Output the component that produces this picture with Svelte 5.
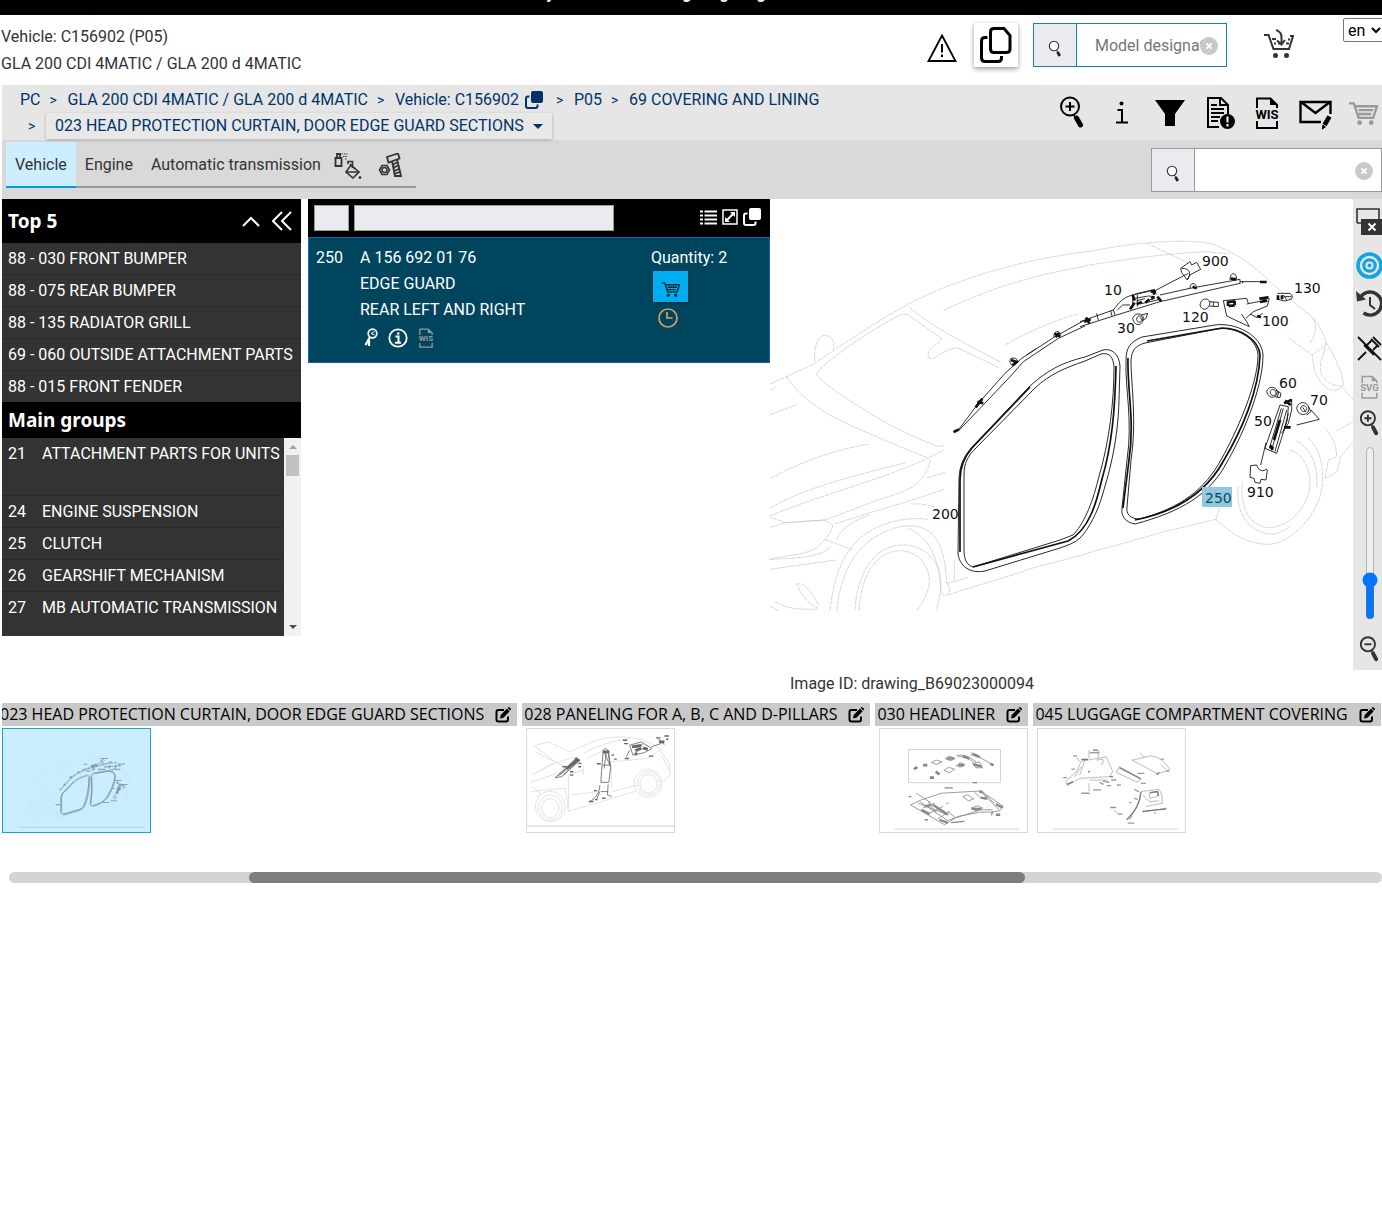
<script>
  let zoom = $state(20);

  const top5 = [
    '88 - 030 FRONT BUMPER',
    '88 - 075 REAR BUMPER',
    '88 - 135 RADIATOR GRILL',
    '69 - 060 OUTSIDE ATTACHMENT PARTS',
    '88 - 015 FRONT FENDER'
  ];

  const mainGroups = [
    { id: '21', name: 'ATTACHMENT PARTS FOR UNITS', tall: true },
    { id: '24', name: 'ENGINE SUSPENSION' },
    { id: '25', name: 'CLUTCH' },
    { id: '26', name: 'GEARSHIFT MECHANISM' },
    { id: '27', name: 'MB AUTOMATIC TRANSMISSION', last: true }
  ];

  const callouts = [
    ['900', 1202, 266], ['10', 1104, 295], ['30', 1117, 333], ['120', 1182, 322],
    ['100', 1262, 326], ['130', 1294, 293], ['60', 1279, 388], ['70', 1310, 405],
    ['50', 1254, 426], ['910', 1247, 497], ['200', 932, 519]
  ];
</script>

{#snippet cartShape()}
  <path d="M1 3h5l5 15h15l4-12H8M11 10h15M11 14h13" fill="none" stroke="currentColor" stroke-width="2.4" />
  <circle cx="12" cy="23" r="2.5" fill="currentColor" />
  <circle cx="24" cy="23" r="2.5" fill="currentColor" />
{/snippet}

{#snippet lens()}
  <svg width="14" height="18" viewBox="0 0 14 18" aria-hidden="true">
    <circle cx="6" cy="6" r="4.7" fill="#fff" stroke="#333" stroke-width="1.1" />
    <path d="M8.5 10l1 2" stroke="#333" stroke-width="1" />
    <path d="M9.5 12l2.3 4" stroke="#222" stroke-width="2.8" />
  </svg>
{/snippet}

{#snippet clearMark()}
  <svg width="18" height="18" viewBox="0 0 18 18" aria-hidden="true">
    <circle cx="9" cy="9" r="9" fill="#c8c8c8" />
    <path d="M6.4 6.4l5.2 5.2M11.6 6.4l-5.2 5.2" stroke="#fff" stroke-width="2" />
  </svg>
{/snippet}

{#snippet magnifier(minus)}
  <svg width="19" height="26" viewBox="0 0 24 33" aria-hidden="true">
    <circle cx="10" cy="10.500" r="9" fill="none" stroke="currentColor" stroke-width="2.400" />
    <path d={minus ? 'M5.500 10.500h9' : 'M5.500 10.500h9M10 6v9'} stroke="currentColor" stroke-width="2.400" />
    <path d="M14 18l2 3" stroke="currentColor" stroke-width="1.500" />
    <path d="M16.500 22l4 7.500" stroke="currentColor" stroke-width="5" stroke-linecap="round" />
  </svg>
{/snippet}

{#snippet docText(label, size)}
  <path d="M3 11V1.500h13.500L23 8v3M3 24v7h20v-7" fill="none" stroke="currentColor" stroke-width="2" />
  <path d="M16 1.500V8h7z" fill="currentColor" />
  <text x="13" y="21.500" text-anchor="middle" font-size={size} font-weight="700" fill="currentColor">{label}</text>
{/snippet}

{#snippet copyShape()}
  <rect x="6" y="0" width="12" height="12" rx="2" fill="currentColor" />
  <path d="M4.500 5.500H3a2 2 0 0 0-2 2V15a2 2 0 0 0 2 2h7.500a2 2 0 0 0 2-2v-1.500" fill="none" stroke="currentColor" stroke-width="2" />
{/snippet}

{#snippet editIcon()}
  <svg width="16" height="16" viewBox="0 0 16 16" aria-hidden="true">
    <path d="M9 3H3.500Q1.500 3 1.500 5v7.500Q1.500 14.500 3.500 14.500H11q2 0 2-2V9.500" fill="none" stroke="#000" stroke-width="2" />
    <path d="M5 11.500l.7-3.600L12 1.600l2.700 2.700L8.400 10.700zM12.700.9l.7-.7q.6-.4 1.200.2l1.200 1.200q.5.500 0 1.200l-.6.700z" fill="#000" />
  </svg>
{/snippet}

{#snippet partsDrawing()}
  <g class="faint" transform="translate(765 220) scale(.33333)">
    <path d="M15 492L65 470L150 430L215 385C300 330 400 260 520 210C640 160 800 115 960 96M535 272C650 215 800 165 960 139M720 375C790 335 870 300 940 282" />
    <path d="M150 425C145 390 155 345 182 346C205 350 208 370 206 388" />
    <path d="M65 470C110 540 190 590 300 635C380 670 440 695 490 714L537 690M155 462C165 440 230 390 310 340C350 315 390 290 415 283L428 284L530 355L522 368C500 380 485 395 490 412L505 416L530 400C550 390 565 382 580 384L700 442M433 262C500 320 600 370 710 428M155 462C170 490 250 540 340 595C420 640 480 665 520 680L537 676" />
    <path d="M15 584L96 554M15 512L32 500M15 776C100 730 200 690 310 673M15 865C120 800 300 760 425 727M15 888C150 830 350 780 490 714M495 718C492 760 460 800 400 820L320 847L180 900L62 908L15 892M485 774L540 757M210 912C300 880 420 850 537 808M215 960C230 920 270 900 315 885M437 852C470 850 490 855 510 862" />
    <path d="M15 922L62 908L180 900L203 915C200 940 180 955 165 975C140 1005 60 1005 15 1018M180 958L263 990M15 1018C100 1015 180 1010 197 978M15 1048L212 1020" />
    <path d="M195 1172C205 1080 230 1000 290 950C350 905 420 890 490 898M215 1172C225 1080 255 1010 310 965C350 935 400 915 440 918C500 920 540 960 545 1090" />
    <path d="M270 1172C275 1060 330 970 420 975C500 980 540 1050 525 1120L515 1172M283 1172C285 1070 335 990 410 992C490 1000 505 1080 485 1120C475 1150 465 1160 455 1172" />
    <path d="M430 925C480 945 520 1000 525 1090M545 1090C560 1100 555 1125 540 1127C525 1120 525 1110 527 1090M568 1020V1085L545 1090M568 1085L608 1072M550 1125C650 1090 720 1075 800 1045L960 1003" />
    <path d="M95 1092C110 1088 130 1095 160 1155L155 1163C130 1150 105 1120 95 1092M30 1145C60 1165 100 1170 160 1167M15 1158L40 1172" />
  </g>
  <g class="faint" transform="translate(1080 230) scale(.33333)">
    <path d="M15 66C80 55 150 42 200 39C280 32 360 30 405 45C450 62 500 90 555 140M15 107C100 95 200 75 380 65L450 72M200 39C250 65 300 85 325 100" />
    <path d="M555 140C600 185 660 230 700 265C720 290 735 320 737 335C760 370 790 430 790 465C780 490 740 480 735 470C715 450 700 430 697 375L627 325M700 265C712 290 705 320 690 340M737 335C740 360 715 390 722 430C740 460 765 470 788 468M697 375L737 345M790 475L820 510" />
  </g>
  <g class="faint" transform="translate(1080 400) scale(.33333)">
    <path d="M630 150C670 165 690 200 690 255C685 320 630 380 570 383C510 380 480 330 487 245M475 260C465 330 500 400 580 403C600 400 615 390 630 380M650 123C700 150 715 210 710 260M685 115C730 150 735 240 720 290C690 380 610 435 560 433C500 430 450 400 408 358L418 325M408 358L260 393L130 430L15 461M735 85C760 110 770 140 770 170L745 180L735 235L772 215L782 170L820 125M770 92L820 65" />
  </g>
  <g class="dark">
    <path d="M959 480C959 465 965 455 972 447L1030 386C1050 368 1065 362 1085 357L1103 350C1112 348 1119 354 1120 366L1119 400C1118 440 1110 470 1103 493C1098 512 1088 530 1080 538C1075 543 1068 545 1060 548L985 571C970 574 959 566 958 553Z" />
    <path d="M964 475C964 463 968 456 975 449L1035 388C1050 374 1065 368 1085 361L1101 354C1110 352 1113 358 1114 366C1114 400 1110 440 1098 480C1092 505 1083 525 1073 535L1060 540L973 567C967 565 964 560 964 550Z" />
    <path d="M1126 360C1126 348 1130 342 1142 337L1215 325C1235 322 1262 335 1263 355C1263 390 1240 440 1227 462C1210 495 1180 512 1135 524C1124 522 1121 515 1122 508L1127 460C1133 420 1125 390 1126 360Z" />
    <path d="M1131 360C1132 350 1135 346 1145 343L1217 329C1235 326 1257 338 1258 355C1258 385 1235 435 1222 458C1205 490 1180 508 1140 519C1130 519 1126 514 1127 507L1131 460C1137 420 1131 385 1131 360Z" />
    <path class="heavy" d="M960 552V480C960 466 965 456 972 448L1030 387M973 567L1068 541C1090 530 1097 500 1102 479C1112 445 1115 410 1116 366" />
    <path class="heavy" d="M1135 520C1180 511 1208 490 1224 460C1242 430 1259 390 1260 355C1259 340 1240 328 1222 328L1147 341M1123 508L1129 460C1135 420 1127 390 1128 358" />
  </g>
  <g class="dark" transform="translate(765 220) scale(.33333)">
    <path d="M565 635L580 630L640 550L720 460L770 415L870 350L960 300M583 630L650 560L740 465L775 425L880 355L960 318M785 405L815 385" />
    <path class="blob" d="M566 636L582 628M632 562L652 536M637 545L655 550M738 420L755 426L742 436M868 340L886 350M872 352L882 338" />
    <path d="M738 415C730 425 740 445 750 432C765 425 755 410 738 415M866 350C868 330 885 330 886 345" />
  </g>
  <g class="dark" transform="translate(1080 230) scale(.33333)">
    <path d="M0 275L100 240C115 220 130 200 160 195L215 182M0 290L110 255L240 215L480 160M100 240L105 255M92 242L96 258M50 250L55 270M112 240L128 225H150M240 195L330 175L480 148V162M488 153V160M480 155H545M225 182L325 130" />
    <path d="M165 192L225 178M165 205L205 198L225 200M170 212L195 206M200 212L225 205M180 222L240 208M158 192V235M172 195V230M215 180L230 192" />
    <path class="blob" d="M12 275L32 268M18 262L28 280M158 195L164 212M164 218L150 238M170 222L186 216M196 218L208 208M214 206L222 200M212 184L228 186M222 180V194M232 200L244 214M338 170L348 175M452 146L468 148M540 156H560" />
    <path d="M330 175C330 155 350 155 350 178M450 150C450 125 470 125 470 148" />
    <path d="M302 115L330 95L335 105L350 97L362 118L348 125L330 135L322 150L305 128ZM305 115C330 115 335 130 322 148" />
    <path d="M360 225C362 205 385 200 390 218C388 240 365 245 360 225M388 215L415 217V230L388 228M400 216V229" />
    <path d="M158 265C165 245 190 250 190 265C190 285 165 295 158 265M170 268C170 255 185 255 188 265C185 280 172 280 170 268M185 255L203 250L198 265L190 270M180 262L188 272" />
    <path d="M430 212L500 205L505 220M430 212L440 258L508 290M500 222L540 214M568 205L562 228L520 245L498 265M484 252L500 275L508 290M510 252L530 262L548 250" />
    <path class="blob" d="M443 216L466 214M446 228L464 226M444 214V228M464 214V226M538 206L566 202M540 216L562 212M552 202V214M531 258L543 262" />
    <path class="blob" d="M594 196V210M606 196V208" />
    <path d="M592 190H630L637 198L635 207L615 213L592 208M610 195L620 210M612 200H634" />
    <path d="M560 485C565 465 590 470 592 485C590 505 568 510 560 485M570 485C575 472 590 480 588 490C585 500 572 500 570 485M588 480L603 490L600 503L585 500M596 485L592 502" />
    <path d="M650 535C655 510 685 515 687 535C685 560 655 560 650 535M662 535C665 520 682 528 680 538C675 550 664 545 662 535M685 530L693 545L680 555M668 532L678 546M693 540L718 568L650 585" />
    <path d="M600 525L625 530L622 570L590 670L555 655ZM610 535L575 660M620 540L585 665M604 535L568 655M615 515L635 508V540L625 580L605 610M625 550L612 600" />
    <path class="blob" d="M612 520L635 510M615 512L632 525M612 592H632M600 570L582 630M572 650L578 660" />
  </g>
  <g class="dark" transform="translate(1080 400) scale(.33333)">
    <path d="M558 128L542 195M512 197L530 195C535 215 555 215 558 207L562 210L558 240L543 238L540 250L525 247L522 235L510 232Z" />
    <path class="blob" d="M570 136L580 146" />
  </g>
{/snippet}

<div class="page">
  <div class="banner" aria-hidden="true"><span>y</span><span>g</span><span>g</span><span>g</span></div>

  <header>
    <div class="vehicle">
      <div>Vehicle: C156902 (P05)</div>
      <div>GLA 200 CDI 4MATIC / GLA 200 d 4MATIC</div>
    </div>
    <div class="head-tools">
      <button class="plain warn" aria-label="Warnings">
        <svg width="30" height="28" viewBox="0 0 30 28" aria-hidden="true">
          <path d="M15 1.500L28.500 27H1.500z" fill="none" stroke="#000" stroke-width="1.800" />
          <path d="M15 10v8.500M15 20.500v2.500" stroke="#000" stroke-width="2" />
        </svg>
      </button>
      <button class="plain copy" aria-label="Copy vehicle">
        <svg width="32" height="36" viewBox="0 0 32 36" aria-hidden="true">
          <path d="M13 1.500h11l6 7V22q0 3.500-3.500 3.500H14q-3.500 0-3.500-3.500V5q0-3.500 3.500-3.500z" fill="none" stroke="#000" stroke-width="3" />
          <path d="M7.500 10.500H5q-3.500 0-3.500 3.500v17q0 3.500 3.500 3.500h13q3.500 0 3.500-3.500v-2" fill="none" stroke="#000" stroke-width="3" />
        </svg>
      </button>
      <div class="search blue">
        <button class="go" aria-label="Search model">{@render lens()}</button>
        <input type="text" aria-label="Model designation" placeholder="Model designation" />
        <button class="plain clear" aria-label="Clear model">{@render clearMark()}</button>
      </div>
      <button class="plain import" aria-label="Import cart">
        <svg width="30" height="30" viewBox="0 0 30 30" aria-hidden="true">
          <path d="M0 6h4.500l5 14h15.500l4-13h-3M8 10h4M10 14.500h2M14 14.500h2M22 14.500h3M24 10.500h2" fill="none" stroke="#333" stroke-width="2" />
          <path d="M12 1q6 2 5.500 8v6M13 11.500l4.500 4 3.500-4.500" fill="none" stroke="#333" stroke-width="2" />
          <circle cx="11.500" cy="26.500" r="2.500" fill="#333" />
          <circle cx="22.500" cy="26.500" r="2.500" fill="#333" />
        </svg>
      </button>
      <select aria-label="Language"><option>en</option><option>de</option></select>
    </div>
  </header>

  <div class="crumb-bar">
    <nav class="crumbs" aria-label="Breadcrumb">
      <div class="line">
        <a href="#pc">PC</a><i>&gt;</i>
        <a href="#model">GLA 200 CDI 4MATIC / GLA 200 d 4MATIC</a><i>&gt;</i>
        <a href="#vehicle">Vehicle: C156902 <svg width="18" height="18" viewBox="0 0 18 18" aria-hidden="true">{@render copyShape()}</svg></a><i>&gt;</i>
        <a href="#p05">P05</a><i>&gt;</i>
        <a href="#g69">69 COVERING AND LINING</a>
      </div>
      <div class="line second">
        <i>&gt;</i>
        <button class="dropdown">023 HEAD PROTECTION CURTAIN, DOOR EDGE GUARD SECTIONS<span class="caret"></span></button>
      </div>
    </nav>
    <div class="actions">
      <button class="plain" aria-label="Zoom">
        <svg width="24" height="33" viewBox="0 0 24 33" aria-hidden="true">
          <circle cx="10" cy="10.500" r="9" fill="none" stroke="#000" stroke-width="2" />
          <path d="M5.500 10.500h9M10 6v9" stroke="#000" stroke-width="2" />
          <path d="M13.500 18.500l2 3" stroke="#000" stroke-width="1.500" />
          <path d="M16.500 22l4 7" stroke="#000" stroke-width="5" stroke-linecap="round" />
        </svg>
      </button>
      <button class="plain info" aria-label="Information">
        <svg width="12" height="23" viewBox="0 0 12 23" aria-hidden="true">
          <circle cx="5.500" cy="2.500" r="2" /><path d="M1.500 9H6v12M0 21.500h12" fill="none" stroke="#000" stroke-width="2" />
        </svg>
      </button>
      <button class="plain funnel" aria-label="Filter">
        <svg width="30" height="26" viewBox="0 0 30 26" aria-hidden="true"><path d="M0 0h30L20 14v12H10V14z" /></svg>
      </button>
      <button class="plain doc" aria-label="Notes">
        <svg width="30" height="34" viewBox="0 0 30 34" aria-hidden="true">
          <path d="M13 31H2V2h13l7 7v9" fill="none" stroke="#000" stroke-width="2" />
          <path d="M14 2v7h8M5 9h6M5 13h13M5 17h13M5 21h9M5 25h7" fill="none" stroke="#000" stroke-width="2" />
          <circle cx="21.500" cy="25.500" r="7.500" /><path d="M21.500 20.500v6M21.500 28v2.500" stroke="#fff" stroke-width="2" />
        </svg>
      </button>
      <button class="plain wis" aria-label="WIS documents">
        <svg width="26" height="32" viewBox="0 0 26 32" aria-hidden="true">{@render docText('WIS', 13)}</svg>
      </button>
      <button class="plain mail" aria-label="Send message">
        <svg width="34" height="30" viewBox="0 0 34 30" aria-hidden="true">
          <path d="M22 22H1.500V2h30v12M2 2l14.500 11L31 2" fill="none" stroke="#000" stroke-width="2.400" />
          <path d="M30.500 16.500L25.500 25" stroke="#000" stroke-width="4.500" /><path d="M24 25l-.7 4 3-2z" stroke="#000" />
        </svg>
      </button>
      <button class="plain grey" aria-label="Cart">
        <svg width="30" height="26" viewBox="0 0 31 26" aria-hidden="true">{@render cartShape()}</svg>
      </button>
    </div>
  </div>

  <div class="tab-bar">
    <div class="tabs">
      <button class="tab active">Vehicle</button>
      <button class="tab">Engine</button>
      <button class="tab">Automatic transmission</button>
      <button class="tab paint" aria-label="Paint and fluids">
        <svg width="28" height="28" viewBox="0 0 28 28" fill="none" stroke="#333" aria-hidden="true">
          <path d="M1.500 6h6v8h-6zM3 6V2h3v4" stroke-width="1.800" />
          <path d="M7.500 2h6M9 4.500h4M11 7h2" stroke-width="1.200" stroke-dasharray="1.500 1" />
          <path d="M17 13l8 7-6 6-7-6zM14 12v-2.500h4.500V16" stroke-width="1.600" />
          <path d="M16 12l5 5M13 20h11" stroke-width="1.600" /><circle cx="26" cy="25.500" r="1" fill="#333" />
        </svg>
      </button>
      <button class="tab bolt" aria-label="Standard parts">
        <svg width="26" height="26" viewBox="0 0 26 26" fill="none" stroke="#333" aria-hidden="true">
          <path d="M9 4l11-3.500 1.500 5-11 4zM14 8l3 15h6L19 6" stroke-width="1.800" />
          <path d="M14 12l6-3M15 15l6-3M16 18l6-2.500M16 21l7-2.500" stroke-width="1.800" />
          <path d="M4 12.500h5l2.500 4.500L9 21.500H4L1.500 17z" stroke-width="1.600" /><circle cx="6.500" cy="17" r="2.500" stroke-width="1.500" />
        </svg>
      </button>
    </div>
    <div class="search wide">
      <button class="go" aria-label="Search parts">{@render lens()}</button>
      <input type="text" aria-label="Search parts" />
      <button class="plain clear" aria-label="Clear search">{@render clearMark()}</button>
    </div>
  </div>

  <main>
    <aside>
      <div class="side-head top">
        <h2>Top 5</h2>
        <button class="plain" aria-label="Collapse list">
          <svg width="18" height="11" viewBox="0 0 18 11" aria-hidden="true"><path d="M1 10l8-8 8 8" fill="none" stroke="#fff" stroke-width="2" /></svg>
        </button>
        <button class="plain" aria-label="Hide panel">
          <svg width="20" height="20" viewBox="0 0 20 20" aria-hidden="true"><path d="M10 1l-9 9 9 9M19 1l-9 9 9 9" fill="none" stroke="#fff" stroke-width="2" /></svg>
        </button>
      </div>
      <ul>
        {#each top5 as item}<li><a href="#top">{item}</a></li>{/each}
      </ul>
      <div class="side-head"><h2>Main groups</h2></div>
      <div class="groups">
        <ul>
          {#each mainGroups as g}
            <li class:tall={g.tall} class:last={g.last}><a href="#group"><span>{g.id}</span><span>{g.name}</span></a></li>
          {/each}
        </ul>
        <div class="vbar" aria-hidden="true"><b class="up"></b><b class="grip"></b><b class="down"></b></div>
      </div>
    </aside>

    <section class="parts">
      <div class="parts-head">
        <input class="pos" type="text" aria-label="Position" />
        <input class="term" type="text" aria-label="Part filter" />
        <span class="fill"></span>
        <button class="plain" aria-label="List view">
          <svg width="17" height="15" viewBox="0 0 17 15" aria-hidden="true"><path d="M0 1.500h3M0 5.500h3M0 9.500h3M0 13.500h3M4.500 1.500H17M4.500 5.500H17M4.500 9.500H17M4.500 13.500H17" stroke="#fff" stroke-width="2" /></svg>
        </button>
        <button class="plain" aria-label="Expand">
          <svg width="16" height="16" viewBox="0 0 16 16" aria-hidden="true"><path d="M1 1h14v14H1z" fill="none" stroke="#fff" stroke-width="1.500" /><path d="M5 11l6-6" stroke="#fff" stroke-width="2" /><path d="M8 3h5v5zM3 8v5h5z" fill="#fff" /></svg>
        </button>
        <button class="plain" aria-label="Copy list">
          <svg class="white" width="18" height="18" viewBox="0 0 18 18" aria-hidden="true">{@render copyShape()}</svg>
        </button>
      </div>
      <article>
        <div class="num">250</div>
        <div class="desc">
          <div>A 156 692 01 76</div>
          <div>EDGE GUARD</div>
          <div>REAR LEFT AND RIGHT</div>
          <div class="marks">
            <svg width="14" height="20" viewBox="0 0 14 20" aria-hidden="true"><circle cx="8.500" cy="5.500" r="4.300" fill="none" stroke="#fff" stroke-width="1.700" /><path d="M10.500 3.500L7 5.500l3.500 1.500" fill="none" stroke="#fff" /><path d="M6 9l-4.500 8M5 12v6" stroke="#fff" stroke-width="2.200" /></svg>
            <svg width="20" height="20" viewBox="0 0 20 20" aria-hidden="true"><circle cx="10" cy="10" r="8.700" fill="none" stroke="#fff" stroke-width="1.800" /><path d="M7.500 8.500h3v6M7 14.800h6M9 5.500h2.500" fill="none" stroke="#fff" stroke-width="2" /></svg>
            <svg class="dim" width="16" height="20" viewBox="0 0 26 32" aria-hidden="true">{@render docText('WIS', 13)}</svg>
          </div>
        </div>
        <div class="qty">
          <div>Quantity: 2</div>
          <button class="add" aria-label="Add to cart"><svg width="19" height="16" viewBox="0 0 31 26" aria-hidden="true">{@render cartShape()}</svg></button>
          <svg class="clock" width="20" height="20" viewBox="0 0 20 20" aria-hidden="true"><circle cx="10" cy="10" r="9" fill="none" stroke="#dd9a60" stroke-width="1.700" /><path d="M9 4v6h5.500" fill="none" stroke="#dd9a60" stroke-width="1.700" /></svg>
        </div>
      </article>
    </section>

    <figure>
      <svg class="plan" viewBox="770 199 583 471" role="img" aria-label="Edge guard drawing">
        {@render partsDrawing()}
        {#each callouts as [t, x, y]}<text {x} {y}>{t}</text>{/each}
        <rect x="1202" y="487" width="30" height="20" fill="#90c9e0" />
        <text class="hit" x="1205" y="503">250</text>
      </svg>
      <figcaption>Image ID: drawing_B69023000094</figcaption>
    </figure>

    <div class="tools">
      <button class="plain" aria-label="Close image">
        <svg width="28" height="28" viewBox="0 0 28 28" aria-hidden="true"><path d="M2 16V2h22v10M2 16h5" fill="none" stroke="#333" stroke-width="1.600" /><path d="M6 12h22v16H6z" fill="#333" /><path d="M13.500 16.500l7 7M20.500 16.500l-7 7" stroke="#fff" stroke-width="2" /></svg>
      </button>
      <button class="plain t2" aria-label="Target">
        <svg width="27" height="27" viewBox="0 0 27 27" aria-hidden="true"><g fill="none" stroke="#13a5e2"><circle cx="13.500" cy="13.500" r="11.500" stroke-width="3.600" /><circle cx="13.500" cy="13.500" r="5.700" stroke-width="3.200" /></g><circle cx="13.500" cy="13.500" r="2" fill="#13a5e2" /></svg>
      </button>
      <button class="plain t3" aria-label="Reset">
        <svg width="27" height="28" viewBox="0 0 27 28" aria-hidden="true"><path d="M4 8A11.500 11.500 0 1 1 7.500 23" fill="none" stroke="#333" stroke-width="3.400" /><path d="M0 1l1 10.500 9-2z" fill="#333" /><path d="M14 7v8l5 4" fill="none" stroke="#333" stroke-width="2" /></svg>
      </button>
      <button class="plain t4" aria-label="Unpin">
        <svg width="25" height="25" viewBox="0 0 25 25" fill="none" stroke="#111" stroke-width="1.800" aria-hidden="true"><path d="M1 1l23 23M1 24l8-8M14 3l8 8M16 1l8 8M15 4l-5 5M7 9l10 10M16 14l4-4" /></svg>
      </button>
      <button class="plain dim t5" aria-label="SVG export">
        <svg width="19" height="24" viewBox="0 0 26 32" aria-hidden="true">{@render docText('SVG', 13)}</svg>
      </button>
      <button class="plain t6" aria-label="Zoom in">{@render magnifier(false)}</button>
      <input type="range" min="0" max="100" bind:value={zoom} aria-label="Zoom level" />
      <button class="plain t7" aria-label="Zoom out">{@render magnifier(true)}</button>
    </div>
  </main>

  <section class="carousel">
    <div class="strip">
      <div class="card">
        <div class="title"><span>023 HEAD PROTECTION CURTAIN, DOOR EDGE GUARD SECTIONS</span>{@render editIcon()}</div>
        <button class="thumb selected" aria-label="023 drawing">
          <svg class="mini" viewBox="638 94 816 572" aria-hidden="true">
            {@render partsDrawing()}
            <path d="M1180 258h40M1085 290h22M1275 288h40M1165 318h40M1260 318h30M1100 328h24M1262 380h34M1290 402h40M1240 424h20M1235 492h36M1190 502h36M930 514h30" />
            <path class="rule" d="M720 640H1430" />
          </svg>
        </button>
      </div>
      <div class="card">
        <div class="title"><span>028 PANELING FOR A, B, C AND D-PILLARS</span>{@render editIcon()}</div>
        <button class="thumb" aria-label="028 drawing">
          <svg viewBox="35 101 444 311" fill="none" aria-hidden="true">
            <g stroke="#ddd" stroke-width="2.500">
              <path d="M55 150L120 200L60 235M60 150L100 140L165 170L220 145C300 110 380 125 430 155L465 205L468 240L445 260M50 240C100 210 150 190 190 185M45 262C80 250 130 235 155 222M50 290L150 280L160 350L360 290M50 275L75 295L60 310M160 340V240L205 225M205 240V215L180 205M60 170L150 215M205 175C250 150 300 135 345 130M215 190L260 170M290 200L400 190L440 160M290 290L370 270M290 215V280M168 300L250 290M440 180L465 225" />
              <ellipse cx="105" cy="335" rx="45" ry="46" /><ellipse cx="105" cy="338" rx="36" ry="38" /><ellipse cx="105" cy="340" rx="26" ry="29" /><ellipse cx="400" cy="265" rx="42" ry="42" /><ellipse cx="402" cy="265" rx="34" ry="35" /><ellipse cx="402" cy="266" rx="26" ry="28" />
              <path d="M35 394H479" stroke-width="4" />
            </g>
            <g stroke="#666" stroke-width="2.500">
              <path d="M120 248L185 188L195 195L140 245ZM135 240L188 192M145 240L192 195M128 244L180 195M265 165L258 262H282L288 215L280 165L272 160ZM268 170L285 210M275 170L268 220M262 210H288M280 170L286 215M255 270C255 290 245 310 222 322M280 268L278 300L290 305M245 315L255 290M258 290H280M345 150L355 180L390 172L412 160L380 140ZM358 155L400 165M365 172L385 145M410 155L440 145M430 130L450 148M345 165L335 185" />
              <path d="M155 222L188 194M352 155L380 150M362 166L380 160M386 158L400 162M360 176H368M264 170H284M180 190L192 198M434 140H450" stroke-width="8" />
              <path d="M142 215H156M165 230H175M165 240H175M190 205H200M190 215H198M246 206H258M290 180H298M298 192H306M325 135H338M328 145H340M330 190H343M403 183H416M425 128H438M450 122H464M455 132H462M237 287H246M262 310H272M222 320H236M240 314H248" stroke-width="4" />
            </g>
          </svg>
        </button>
      </div>
      <div class="card">
        <div class="title"><span>030 HEADLINER</span>{@render editIcon()}</div>
        <button class="thumb" aria-label="030 drawing">
          <svg viewBox="35 101 444 311" fill="none" aria-hidden="true">
            <path d="M121 163H399V263H121zM79 403H456" stroke="#ccc" stroke-width="2.500" />
            <g stroke="#888" stroke-width="2.500">
              <path d="M190 202L205 195L222 200L206 208ZM228 226L242 217L260 222L245 233ZM232 190L245 183L262 190L248 197ZM265 212L278 203L292 209L278 216ZM265 182C285 175 305 185 325 200M270 185C290 182 305 190 318 203M310 172L378 210M308 178L340 188M315 205L335 200L345 218L325 218Z" />
              <path d="M165 210H178M137 222L148 216M185 248H198M203 230L215 238M238 190H258M272 210H288M318 208L342 214M368 206L378 210M315 176L335 185M285 183L305 190" stroke-width="8" />
              <path d="M127 330L160 315L220 295L340 288L408 335L395 348L375 352L340 352L270 365L230 390L127 330M150 325L240 360M155 320L235 375M240 350L262 368M285 305L300 300L318 312L302 318ZM310 340L330 333L345 340L325 348ZM145 295L190 325M340 288L380 325M345 296L395 345M320 292L340 310L360 305M235 325H243M180 320L205 355M165 340L200 325M185 355L225 335M210 372L245 350M230 380L340 345L375 345" />
              <path d="M160 345L185 358M195 330L240 360M215 375L240 385M170 335L190 330M335 290L345 292M385 328L405 338M312 342H340M385 360H398M340 308L358 312" stroke-width="7" />
              <path d="M122 305H130M230 279H255M315 263H328M170 375H180M250 384L290 380M375 350L372 362" stroke-width="4" />
            </g>
          </svg>
        </button>
      </div>
      <div class="card">
        <div class="title"><span>045 LUGGAGE COMPARTMENT COVERING</span>{@render editIcon()}</div>
        <button class="thumb" aria-label="045 drawing">
          <svg viewBox="524 101 444 311" fill="none" aria-hidden="true">
            <path d="M569 403H946" stroke="#ccc" stroke-width="2.500" />
            <g stroke="#999" stroke-width="2">
              <path d="M655 198L730 185L750 230L740 245L650 250L612 272L608 258L640 230L655 198M665 195L650 240M678 190V165M705 188L708 165M700 195L720 192V205L712 208M680 255H735M678 265V290M640 185L650 200M655 215L635 245M770 215L835 250L825 262L760 232ZM808 195L865 182C900 188 915 210 922 225L885 236L808 195M832 172L845 188M895 208L915 228M835 290L830 320L800 375L810 365M835 290L890 283L898 300L900 325L850 335M860 295L885 290V305L862 310ZM840 300L860 320L890 318M840 352L912 340M755 345L765 358" />
              <path d="M612 268L630 260M655 193H675M690 165H705M770 218L835 252M835 292C832 320 820 350 792 375M862 293L885 290L888 303M840 350L912 342M675 230H680M740 245H750M885 236L890 232" stroke="#777" stroke-width="4" />
              <path d="M630 182H642M625 222H636M600 248H612M655 295H680M690 285H715M710 262L722 268M732 272H745M720 258L740 262M745 255H760M762 270H774M825 235H845M895 192H905M835 265H850M880 237H888M912 228H920M742 338H760M765 358H780M795 385H815M800 322L806 325M815 283L830 292M815 310L825 314M875 355H880M680 173L710 172" stroke-width="4" />
            </g>
          </svg>
        </button>
      </div>
    </div>
    <div class="hbar" aria-hidden="true"><b></b></div>
  </section>
</div>

<style>
  :global(body) { margin: 0; background: #fff; }
  .page { font: 16px/26px Roboto, "Liberation Sans", sans-serif; color: #333; overflow: hidden; }
  button, input, select { font: inherit; color: inherit; box-sizing: border-box; }
  .plain { display: flex; align-items: center; justify-content: center; padding: 0; border: 0; background: none; }
  svg { display: block; flex: none; }
  a { color: inherit; text-decoration: none; }
  h2 { margin: 0; flex: 1; font: 700 19px/36px "Noto Sans", sans-serif; }
  ul { margin: 0; padding: 0; list-style: none; }

  .banner { display: flex; justify-content: center; align-items: flex-end; height: 15px; box-sizing: border-box; padding: 0 70px 11px 0; gap: 28px; background: #000; color: #fff; font-weight: 700; line-height: 20px; overflow: hidden; }
  .banner span:first-child { margin-right: 100px; }

  header { display: flex; justify-content: space-between; height: 70px; }
  .vehicle { padding: 8px 0 0 1px; line-height: 27px; }
  .head-tools { display: flex; align-items: flex-start; padding-top: 3px; }
  .warn { margin: 16px 17px 0 0; }
  .copy { width: 44px; height: 44px; margin: 5px 15px 0 0; background: #fff; box-shadow: 0 2px 5px #0006; }
  .import { margin: 11px 49px 0 0; }
  select { width: 42px; height: 24px; margin-right: -3px; padding: 0; border: 1px solid #767676; border-radius: 2px; background: #fff; color: #000; }

  .search { position: relative; display: flex; box-sizing: border-box; height: 44px; border: 1px solid #999; background: #fff; }
  .blue { width: 194px; margin: 5px 37px 0 0; border-color: #1583a8; }
  .wide { width: 231px; }
  .go { flex: none; width: 43px; padding: 8px 0 0; border: 0; border-right: 1px solid #999; background: #e9ebee; display: flex; align-items: center; justify-content: center; }
  .blue .go { border-color: #1583a8; }
  .search input { flex: 1; min-width: 0; margin-right: 20px; padding: 2px 0 0 18px; border: 0; background: none; }
  .search input::placeholder { color: #757575; }
  .clear { position: absolute; right: 8px; top: 13px; }

  .crumb-bar { display: flex; justify-content: space-between; margin-left: 2px; height: 55px; background: #e6e6e6; color: #003468; }
  .crumbs { padding: 2px 0 0 18px; }
  .line { display: flex; align-items: center; gap: 9px; height: 26px; }
  .line a { display: flex; align-items: center; gap: 6px; white-space: nowrap; }
  .line i { font-style: normal; font-size: 14px; width: 9px; }
  .line a:has(svg) { margin-right: 4px; }
  .second { padding-left: 8px; }
  .dropdown { display: flex; align-items: center; gap: 9px; height: 26px; padding: 0 9px; border: 0; background: #e8e8e8; box-shadow: 0 1px 3px #0004; white-space: nowrap; }
  .caret { border: 5px solid transparent; border-top-color: #003468; border-bottom: 0; }
  .actions { display: flex; align-items: center; padding-right: 4px; color: #000; }
  .info { margin-left: 32px; }
  .funnel { margin-left: 27px; }
  .doc { margin-left: 21px; }
  .wis { margin-left: 18px; }
  .mail { margin: 4px 0 0 19px; }
  .grey { margin-left: 15px; color: #999; }
  text { font-family: Roboto, sans-serif; }

  .tab-bar { display: flex; align-items: flex-start; justify-content: space-between; margin-left: 2px; padding: 2px 0 0 4px; height: 57px; background: #d9d9d9; }
  .tabs { display: flex; }
  .tab { height: 46px; padding: 2px 9px 0; border: 0; border-bottom: 2px solid #999; background: none; white-space: nowrap; }
  .tab.active { background: #cdeeff; border-color: #009fdc; }
  .tab.paint { padding: 4px 4px 0; }
  .tab.bolt { padding: 4px 12px 0; }
  .wide { margin-top: 6px; }

  main { display: flex; align-items: flex-start; margin-left: 2px; }
  aside { flex: none; width: 299px; margin-right: 7px; color: #fff; background: #333; }
  .side-head { display: flex; align-items: center; gap: 12px; padding: 0 9px 0 6px; height: 36px; background: #000; }
  .side-head.top { height: 44px; }
  li { border-bottom: 1px solid #2a2a2a; line-height: 31px; padding-left: 6px; white-space: nowrap; }
  li:last-child { border: 0; }
  li a { display: flex; }
  .groups { display: flex; }
  .groups ul { flex: 1; }
  .groups span:first-child { width: 34px; }
  .tall { padding-bottom: 26px; }
  .last { padding-bottom: 13px; }
  .vbar { width: 17px; background: #f1f1f1; display: flex; flex-direction: column; align-items: center; }
  .up { border: 4px solid transparent; border-top: 0; border-bottom-color: #a3a3a3; margin: 7px 0 6px; }
  .grip { width: 13px; height: 21px; background: #c1c1c1; }
  .down { border: 4px solid transparent; border-bottom: 0; border-top-color: #505050; margin: auto 0 7px; }

  .parts { flex: none; width: 462px; }
  .parts-head { display: flex; align-items: center; gap: 5px; height: 38px; padding: 0 9px 0 6px; background: #000; }
  .parts-head input { height: 26px; border: 1px solid #999; background: #e9ebee; }
  .parts-head .plain { padding-bottom: 2px; }
  .pos { width: 35px; }
  .term { width: 260px; }
  .fill { flex: 1; }
  .white { color: #fff; }
  article { display: flex; padding: 7px 7px 10px; border: 1px solid #1560b5; background: #00455e; color: #fff; }
  .num { width: 44px; }
  .desc { flex: 1; }
  .marks { display: flex; align-items: center; gap: 10px; height: 29px; padding: 0 0 0 4px; }
  .dim { color: #999; }
  .qty { width: 111px; }
  .add { display: flex; align-items: center; justify-content: center; width: 35px; height: 31px; margin: 0 0 6px 2px; padding: 4px 0 0; border: 0; background: #00adef; color: #002a3a; box-shadow: 0 1px 3px #0005; }
  .clock { margin-left: 7px; }

  figure { flex: 1; min-width: 0; margin: 0; }
  .plan { width: 100%; }
  .plan text { font: 14px "DejaVu Sans", sans-serif; fill: #111; }
  .plan .hit { fill: #0d4a62; }
  figcaption { padding: 1px 0 0 20px; }
  .faint { fill: none; stroke: #b4b4b4; stroke-width: 1.6px; stroke-dasharray: 14 2; }
  .dark { fill: none; stroke: #111; stroke-width: 0.9px; }
  .dark[transform] { stroke-width: 2.6px; }
  .heavy { stroke-width: 1.7px; }
  .blob { stroke-width: 8px; }

  .tools { flex: none; width: 29px; height: 471px; display: flex; flex-direction: column; align-items: center; background: #e6e6e6; color: #333; overflow: hidden; }
  .tools .plain { margin-left: 3px; }
  .tools .plain:first-child { margin-top: 8px; margin-left: 2px; }
  .t2 { margin-top: 17px; }
  .t3 { margin-top: 11px; }
  .t4 { margin-top: 18px; }
  .t5 { margin-top: 14px; }
  .t6 { margin-top: 11px; }
  .tools input { writing-mode: vertical-lr; direction: rtl; width: 16px; height: 174px; margin: 10px 0 16px 5px; }

  .carousel { margin: 6px 0 0 2px; overflow: hidden; }
  .strip { display: flex; gap: 5px; margin-left: -4px; }
  .card { flex: none; }
  .title { display: flex; align-items: center; gap: 11px; padding: 0 6px 0 2px; height: 23px; background: #c9c9c9; color: #000; font: 16px/23px "Open Sans", sans-serif; white-space: nowrap; }
  .thumb { display: block; width: 149px; height: 105px; margin: 2px 0 0 4px; padding: 0; border: 1px solid #d9d9d9; background: #fff; }
  .thumb svg { width: 100%; height: 100%; }
  .selected { border-color: #1ba3d0; background: #cbedfd; }
  .mini { stroke: #8aa5b2; stroke-width: 6px; }
  .mini .faint { stroke: #c2e3f1; stroke-width: 8px; }
  .mini .dark { stroke: #76909c; stroke-width: 3px; }
  .mini .dark[transform] { stroke-width: 8px; }
  .mini .heavy { stroke-width: 4px; }
  .mini .blob { stroke-width: 24px; }
  .mini .rule { stroke: #b5d5e2; stroke-width: 6px; }
  .hbar { height: 11px; margin: 39px 0 0 7px; border-radius: 6px; background: #d4d4d4; display: flex; }
  .hbar b { width: 56.5%; margin-left: 17.5%; border-radius: 6px; background: #7d7d7d; }
</style>
